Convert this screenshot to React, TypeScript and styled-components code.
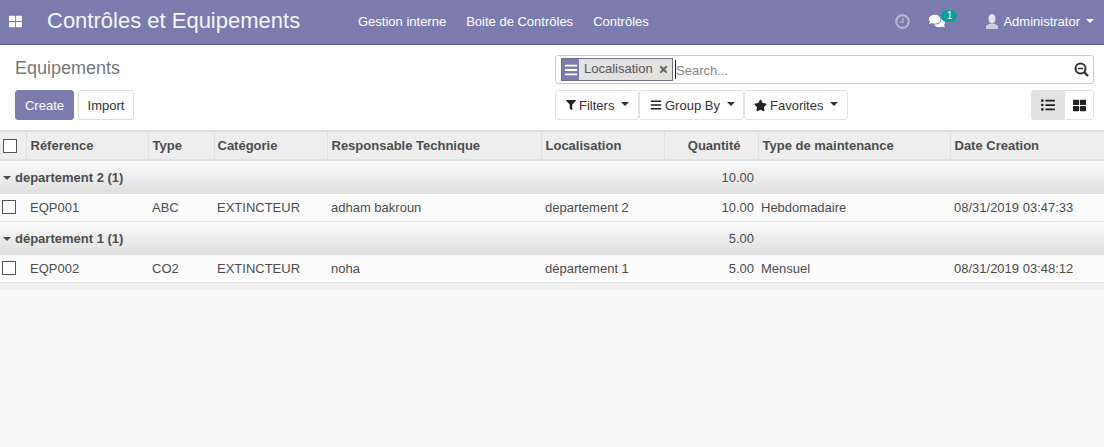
import { createGlobalStyle } from "styled-components";
import styled from "styled-components";
import { FaBars, FaComments, FaFilter, FaListUl, FaStar, FaThLarge, FaTimes } from "react-icons/fa";

const GlobalStyle = createGlobalStyle`
  html, body {
    margin: 0;
    height: 100%;
    background: #f9f9f9;
    font-family: "Liberation Sans", Arial, sans-serif;
    font-size: 13px;
    color: #4c4c4c;
  }
  * { box-sizing: border-box; }
`;

const Page = styled.div`
  width: 1104px;
  height: 447px;
  overflow: hidden;
  display: flex;
  flex-direction: column;
`;

const Navbar = styled.header`
  height: 45px;
  flex: none;
  display: flex;
  align-items: center;
  background: #7c7bad;
  border-bottom: 1px solid #5e5d90;
  color: #fff;
  padding: 0 0 2px 9px;
`;

const AppsButton = styled.span`
  width: 13px;
  display: flex;
  font-size: 13px;
`;

const Brand = styled.span`
  margin-left: 25px;
  font-size: 22px;
  width: 311px;
  white-space: nowrap;
  color: #f4f4f9;
`;

const NavLink = styled.a`
  margin-right: 20px;
  font-size: 13px;
  color: #fff;
`;

const NavRight = styled.div`
  margin-left: auto;
  display: flex;
  align-items: center;
  padding-right: 10px;
`;

const ClockIcon = styled.svg`
  width: 15px;
  height: 15px;
  flex: none;
  margin-right: 19px;
`;

const Messages = styled.span`
  position: relative;
  display: flex;
  font-size: 16px;
  margin-right: 41px;
`;

const Badge = styled.span`
  position: absolute;
  left: 12px;
  top: -3px;
  width: 16px;
  height: 12px;
  border-radius: 6px;
  background: #00a09d;
  color: #fff;
  font-size: 10px;
  line-height: 12px;
  text-align: center;
`;

const UserIcon = styled.svg`
  width: 12px;
  height: 15px;
  margin-right: 5px;
  flex: none;
`;

const Caret = styled.span`
  display: inline-block;
  flex: none;
  width: 0;
  height: 0;
  margin-left: 6px;
  border-left: 4px solid transparent;
  border-right: 4px solid transparent;
  border-top: 4px solid currentColor;
`;

const ButtonCaret = styled(Caret)`
  margin-left: 4px;
  margin-bottom: 2px;
`;

const ControlPanel = styled.section`
  height: 85px;
  flex: none;
  background: #fff;
  display: grid;
  grid-template-columns: 555px 539px;
  padding: 10px 10px 10px 0;
`;

const LeftPanel = styled.div`
  padding-left: 15px;
`;

const Breadcrumb = styled.div`
  font-size: 18px;
  line-height: 26px;
  color: #777;
`;

const ButtonRow = styled.div`
  display: flex;
  gap: 4px;
  margin-top: 9px;
`;

const PrimaryButton = styled.button`
  height: 30px;
  width: 59px;
  padding: 0;
  border: 1px solid #7c7bad;
  border-radius: 3px;
  background: #7c7bad;
  color: #fff;
  font: inherit;
`;

const SecondaryButton = styled.button`
  height: 30px;
  width: 56px;
  padding: 0;
  border: 1px solid #ddd;
  border-radius: 3px;
  background: #fff;
  color: #333;
  font: inherit;
`;

const SearchBox = styled.div`
  height: 29px;
  display: flex;
  align-items: center;
  border: 1px solid #ccc;
  border-radius: 3px;
  padding: 0 4px 0 5px;
  background: #fff;
`;

const Facet = styled.div`
  height: 23px;
  width: 112px;
  flex: none;
  display: flex;
  align-items: center;
  border: 1px solid #6f6f86;
  background: #e2e2e0;
  margin-right: 2px;
  padding-bottom: 2px;
  color: #555;
  font-size: 13px;
  white-space: nowrap;
`;

const FacetIcon = styled.span`
  width: 17px;
  height: 21px;
  margin-bottom: -2px;
  flex: none;
  display: flex;
  align-items: center;
  justify-content: center;
  background: #7c7bad;
  color: #fff;
  font-size: 14px;
  margin-right: 5px;
`;

const FacetRemove = styled.span`
  display: flex;
  margin: 2px 0 0 5px;
  font-size: 11px;
  color: #666;
`;

const SearchText = styled.span`
  flex: 1;
  height: 19px;
  border-left: 1px solid #222;
  padding-top: 1px;
  line-height: 19px;
  color: #888;
  font-size: 13px;
`;

const SearchIcon = styled.svg`
  width: 15px;
  height: 15px;
  flex: none;
`;

const OptionsRow = styled.div`
  display: flex;
  justify-content: space-between;
  margin-top: 6px;
`;

const Dropdowns = styled.div`
  display: flex;
`;

const DropdownButton = styled.button<{ $width: number; $inset: number }>`
  height: 30px;
  width: ${(p) => p.$width}px;
  padding: 0 0 0 ${(p) => p.$inset}px;
  display: flex;
  align-items: center;
  gap: 3px;
  border: 1px solid #e2e2e2;
  border-radius: 3px;
  background: #fff;
  color: #333;
  font: inherit;
  svg { flex: none; color: #222; }
`;

const ViewSwitch = styled.div`
  display: flex;
`;

const ViewButton = styled.button<{ $active?: boolean }>`
  width: ${(p) => (p.$active ? 33 : 30)}px;
  height: 30px;
  padding: 0;
  display: flex;
  align-items: center;
  justify-content: center;
  border: 1px solid #e2e2e2;
  border-radius: ${(p) => (p.$active ? "3px 0 0 3px" : "0 3px 3px 0")};
  background: ${(p) => (p.$active ? "#e2e2e2" : "#fff")};
  color: #222;
`;

const ListTable = styled.table`
  width: 1104px;
  table-layout: fixed;
  border-collapse: collapse;
`;

const HeadRow = styled.tr`
  height: 29px;
  background: #eee;
  border-top: 2px solid #ddd;
  border-bottom: 2px solid #dee2e6;
`;

const HeadCell = styled.th<{ $right?: boolean; $inset?: number }>`
  padding: 0 ${(p) => (p.$right ? "17px" : "4px")} 0 ${(p) => p.$inset ?? 4}px;
  border-left: 1px solid #e0e0e0;
  text-align: ${(p) => (p.$right ? "right" : "left")};
  color: #4c4c4c;
  font-weight: 700;
  white-space: nowrap;

  &:first-child {
    border-left: 0;
  }
`;

const GroupRow = styled.tr`
  height: 34px;
  background: linear-gradient(#fcfcfc, #dedede);
  font-weight: 700;
`;

const GroupLabel = styled.td`
  padding-left: 3px;
  color: #4c4c4c;
`;

const GroupCaret = styled(Caret)`
  margin: 0 4px 2px 0;
`;

const GroupTotal = styled.td`
  text-align: right;
  padding-right: 4px;
  font-weight: 400;
`;

const DataRow = styled.tr`
  height: 27px;
  background: #fcfcfc;
  border-bottom: 1px solid #e4e4e4;
`;

const DataCell = styled.td<{ $right?: boolean; $inset?: number }>`
  padding: 0 4px 0 ${(p) => p.$inset ?? 3}px;
  text-align: ${(p) => (p.$right ? "right" : "left")};
  white-space: nowrap;
`;

const CheckBox = styled.span`
  display: block;
  width: 14px;
  height: 14px;
  margin-left: -1px;
  border: 1px solid #555;
  background: #fff;
`;

const ListFoot = styled.div`
  height: 7px;
  flex: none;
  background: #f0f0f0;
`;

const columns = [26, 122, 66, 113, 214, 123, 94, 192, 154];

const groups = [
  {
    name: "departement 2 (1)",
    total: "10.00",
    row: ["EQP001", "ABC", "EXTINCTEUR", "adham bakroun", "departement 2", "10.00", "Hebdomadaire", "08/31/2019 03:47:33"],
  },
  {
    name: "département 1 (1)",
    total: "5.00",
    row: ["EQP002", "CO2", "EXTINCTEUR", "noha", "département 1", "5.00", "Mensuel", "08/31/2019 03:48:12"],
  },
];

export default function App() {
  return (
    <Page>
      <GlobalStyle />
      <Navbar>
        <AppsButton>
          <FaThLarge />
        </AppsButton>
        <Brand>Contrôles et Equipements</Brand>
        <NavLink>Gestion interne</NavLink>
        <NavLink>Boite de Contrôles</NavLink>
        <NavLink>Contrôles</NavLink>
        <NavRight>
          <ClockIcon viewBox="0 0 15 15">
            <circle cx="7.500" cy="7.500" r="6.300" fill="none" stroke="#b5b5d1" strokeWidth="2.200" />
            <path d="M8 4v4H5" fill="none" stroke="#b5b5d1" strokeWidth="1.300" />
          </ClockIcon>
          <Messages>
            <FaComments />
            <Badge>1</Badge>
          </Messages>
          <UserIcon viewBox="0 0 12 15">
            <ellipse cx="6" cy="4.500" rx="3.400" ry="4.500" fill="#e4e4ee" />
            <path d="M0 15v-2c0-2 3-2.400 4-3.400h4c1 1 4 1.400 4 3.400v2z" fill="#cfcfe0" />
          </UserIcon>
          Administrator
          <Caret />
        </NavRight>
      </Navbar>

      <ControlPanel>
        <LeftPanel>
          <Breadcrumb>Equipements</Breadcrumb>
          <ButtonRow>
            <PrimaryButton>Create</PrimaryButton>
            <SecondaryButton>Import</SecondaryButton>
          </ButtonRow>
        </LeftPanel>
        <div>
          <SearchBox>
            <Facet>
              <FacetIcon>
                <FaBars />
              </FacetIcon>
              Localisation
              <FacetRemove>
                <FaTimes />
              </FacetRemove>
            </Facet>
            <SearchText>Search...</SearchText>
            <SearchIcon viewBox="0 0 15 15">
              <circle cx="6.500" cy="6.500" r="5" fill="none" stroke="#333" strokeWidth="2" />
              <path d="M4 6.500h5" stroke="#333" strokeWidth="1.500" />
              <path d="M10 10l4 4" stroke="#333" strokeWidth="2.400" />
            </SearchIcon>
          </SearchBox>
          <OptionsRow>
            <Dropdowns>
              <DropdownButton $width={84} $inset={10}>
                <FaFilter size={10} />
                Filters
                <ButtonCaret />
              </DropdownButton>
              <DropdownButton $width={105} $inset={10}>
                <FaBars size={12} />
                Group By
                <ButtonCaret />
              </DropdownButton>
              <DropdownButton $width={104} $inset={9}>
                <FaStar size={13} />
                Favorites
                <ButtonCaret />
              </DropdownButton>
            </Dropdowns>
            <ViewSwitch>
              <ViewButton $active>
                <FaListUl size={14} />
              </ViewButton>
              <ViewButton>
                <FaThLarge size={13} />
              </ViewButton>
            </ViewSwitch>
          </OptionsRow>
        </div>
      </ControlPanel>

      <ListTable>
        <colgroup>
          {columns.map((w, i) => (
            <col key={i} style={{ width: w }} />
          ))}
        </colgroup>
        <thead>
          <HeadRow>
            <HeadCell>
              <CheckBox />
            </HeadCell>
            <HeadCell>Réference</HeadCell>
            <HeadCell>Type</HeadCell>
            <HeadCell $inset={3}>Catégorie</HeadCell>
            <HeadCell>Responsable Technique</HeadCell>
            <HeadCell>Localisation</HeadCell>
            <HeadCell $right>Quantité</HeadCell>
            <HeadCell>Type de maintenance</HeadCell>
            <HeadCell>Date Creation</HeadCell>
          </HeadRow>
        </thead>
        <tbody>
          {groups.flatMap((g) => [
            <GroupRow key={g.name}>
              <GroupLabel colSpan={6}>
                <GroupCaret />
                {g.name}
              </GroupLabel>
              <GroupTotal>{g.total}</GroupTotal>
              <td colSpan={2} />
            </GroupRow>,
            <DataRow key={g.row[0]}>
              <DataCell>
                <CheckBox />
              </DataCell>
              <DataCell $inset={4}>{g.row[0]}</DataCell>
              <DataCell $inset={4}>{g.row[1]}</DataCell>
              <DataCell>{g.row[2]}</DataCell>
              <DataCell $inset={4}>{g.row[3]}</DataCell>
              <DataCell $inset={4}>{g.row[4]}</DataCell>
              <DataCell $right>{g.row[5]}</DataCell>
              <DataCell>{g.row[6]}</DataCell>
              <DataCell $inset={4}>{g.row[7]}</DataCell>
            </DataRow>,
          ])}
        </tbody>
      </ListTable>
      <ListFoot />
    </Page>
  );
}
